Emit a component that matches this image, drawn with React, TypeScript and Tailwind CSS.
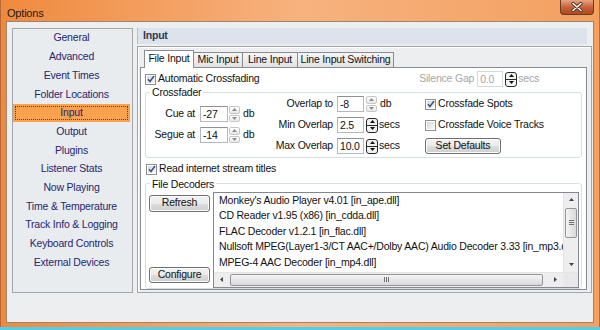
import React from "react";

const navItems = [
  "General",
  "Advanced",
  "Event Times",
  "Folder Locations",
  "Input",
  "Output",
  "Plugins",
  "Listener Stats",
  "Now Playing",
  "Time & Temperature",
  "Track Info & Logging",
  "Keyboard Controls",
  "External Devices",
];

const decoders = [
  "Monkey's Audio Player v4.01 [in_ape.dll]",
  "CD Reader v1.95 (x86) [in_cdda.dll]",
  "FLAC Decoder v1.2.1 [in_flac.dll]",
  "Nullsoft MPEG(Layer1-3/CT AAC+/Dolby AAC) Audio Decoder 3.33 [in_mp3.dll]",
  "MPEG-4 AAC Decoder [in_mp4.dll]",
];

function Tri({ dir, color = "#111" }: { dir: "up" | "down" | "left" | "right"; color?: string }) {
  const pts = {
    up: "0,3 2.5,0 5,3",
    down: "0,0 2.5,3 5,0",
    left: "3,0 0,2.5 3,5",
    right: "0,0 3,2.5 0,5",
  }[dir];
  const vertical = dir === "up" || dir === "down";
  return (
    <svg width={vertical ? 5 : 3} height={vertical ? 3 : 5} viewBox={vertical ? "0 0 5 3" : "0 0 3 5"}>
      <polygon points={pts} fill={color} />
    </svg>
  );
}

function SpinLight() {
  return (
    <div className="flex flex-col gap-[1px] w-[11px] h-[16px] shrink-0">
      <div className="flex-1 border border-[#c6c6c6] rounded-[2px] bg-linear-to-b from-white to-[#e8e8e8] flex items-center justify-center">
        <Tri dir="up" color="#8c8c8c" />
      </div>
      <div className="flex-1 border border-[#c6c6c6] rounded-[2px] bg-linear-to-b from-white to-[#e8e8e8] flex items-center justify-center">
        <Tri dir="down" color="#8c8c8c" />
      </div>
    </div>
  );
}

function SpinDark() {
  return (
    <div className="flex flex-col w-[12px] h-[15px] border border-[#2a2a2a] rounded-[3px] bg-[#f2f2f2] shrink-0 overflow-hidden">
      <div className="flex-1 flex items-center justify-center border-b border-[#2a2a2a]">
        <Tri dir="up" />
      </div>
      <div className="flex-1 flex items-center justify-center">
        <Tri dir="down" />
      </div>
    </div>
  );
}

function Field({ value, className = "", disabled }: { value: string; className?: string; disabled?: boolean }) {
  return (
    <div
      className={`h-[16px] shrink-0 border bg-white pl-[2px] leading-[14px] ${
        disabled ? "border-[#d8d8d8] text-[#a6a6a6]" : "border-[#b5b8c0] border-t-[#8f9197] text-[#111]"
      } ${className}`}
    >
      {value}
    </div>
  );
}

function Check({ on }: { on?: boolean }) {
  return (
    <span className="w-[11px] h-[11px] shrink-0 border border-[#8f8f8f] bg-white p-[1px] flex">
      <span className="flex-1 bg-linear-to-br from-[#d8d8d8] to-[#f9f9f9] flex items-center justify-center">
        {on && (
          <svg width="8" height="8" viewBox="0 0 8 8">
            <path d="M1 4.2 L3 6.5 L7 1" fill="none" stroke="#3d4f8c" strokeWidth="1.5" />
          </svg>
        )}
      </span>
    </span>
  );
}

function Btn({ children, className = "" }: { children: React.ReactNode; className?: string }) {
  return (
    <div
      className={`shrink-0 flex items-center justify-center border border-[#707070] rounded-[3px] shadow-[inset_0_0_0_1px_#fcfcfc] bg-[linear-gradient(#f2f2f2,#ebebeb_50%,#dddddd_50%,#cfcfcf)] text-[#111] ${className}`}
    >
      {children}
    </div>
  );
}

export default function App() {
  return (
    <div className="w-[600px] h-[330px] flex flex-col font-['Liberation_Sans',Arial,sans-serif] text-[10.5px] tracking-[-0.2px] text-[#111]">
      <div className="h-[327px] flex flex-col bg-linear-to-r from-[#ef8a3c] via-[#f7b27e] to-[#f3a060] border-l border-r border-[#b8683a]">
        {/* title bar */}
        <div className="h-[21px] flex items-start justify-between">
          <div className="pl-[6px] pt-[5px] text-[11px] text-[#1a1a1a]">Options</div>
          <div className="mr-[5px] w-[34px] h-[15px] rounded-b-[4px] border border-t-0 border-[#6f3a22] bg-[linear-gradient(#e7a582,#c8643c_50%,#ad4a22)] flex items-center justify-center">
            <svg width="12" height="10" viewBox="0 0 12 10">
              <path d="M2 1.5 L10 8.5 M10 1.5 L2 8.5" stroke="#4a2a1c" strokeWidth="3.2" strokeLinecap="round" />
              <path d="M2 1.5 L10 8.5 M10 1.5 L2 8.5" stroke="#ffffff" strokeWidth="1.6" strokeLinecap="round" />
            </svg>
          </div>
        </div>

        {/* client area */}
        <div className="mx-[5px] h-[302px] border border-[#9c8472] bg-[#eceeef] flex gap-[4px] pl-[5px] pt-[6px]">
          {/* nav list */}
          <div className="w-[121px] h-[265px] border border-[#a4a6a8] bg-[#e9ecee] flex flex-col pr-[2px]">
            {navItems.map((item) =>
              item === "Input" ? (
                <div key={item} className="h-[18.7px] shrink-0 bg-[#f8a24e] p-[2px]">
                  <div className="h-full border border-dotted border-[#5a3a20] flex items-center justify-center text-[#262673]">
                    {item}
                  </div>
                </div>
              ) : (
                <div key={item} className="h-[18.7px] shrink-0 flex items-center justify-center text-[#262673]">
                  {item}
                </div>
              )
            )}
          </div>

          {/* right side */}
          <div className="w-[455px] h-[265px] flex flex-col">
            <div className="h-[16px] w-[450px] border-l border-[#b9bec4] bg-[#dde3ea] pl-[5px] flex items-center font-bold text-[#2c3756]">
              Input
            </div>

            <div className="mt-[2px] h-[247px] border border-[#a3a5a8] shadow-[inset_1px_1px_0_#ffffff] pl-[2px] pt-[3px] pr-[3px] flex flex-col">
              {/* tabs */}
              <div className="h-[17px] pl-[4px] flex items-end">
                <div className="relative z-10 w-[50px] h-[18px] -mb-[1px] border border-b-0 border-[#898c95] bg-white flex items-center justify-center pb-[1px]">
                  File Input
                </div>
                <div className="w-[49px] h-[15px] border border-l-0 border-b-0 border-[#898c95] bg-linear-to-b from-[#f6f6f6] to-[#e2e2e2] flex items-center justify-center">
                  Mic Input
                </div>
                <div className="w-[55px] h-[15px] border border-l-0 border-b-0 border-[#898c95] bg-linear-to-b from-[#f6f6f6] to-[#e2e2e2] flex items-center justify-center">
                  Line Input
                </div>
                <div className="w-[96px] h-[15px] border border-l-0 border-b-0 border-[#898c95] bg-linear-to-b from-[#f6f6f6] to-[#e2e2e2] flex items-center justify-center">
                  Line Input Switching
                </div>
              </div>

              {/* tab page */}
              <div className="w-[447px] h-[223px] border border-[#898c95] bg-white flex flex-col">
                <div className="mt-[4px] h-[14px] pl-[4px] flex items-center">
                  <Check on />
                  <span className="ml-[2px]">Automatic Crossfading</span>
                  <div className="ml-auto mr-[47px] flex items-center">
                    <span className="text-[#a6a6a6]">Silence Gap</span>
                    <Field value="0.0" disabled className="ml-[3px] w-[26px] h-[15px]" />
                    <div className="ml-[2px]">
                      <SpinDark />
                    </div>
                    <span className="ml-[1px] text-[#a6a6a6]">secs</span>
                  </div>
                </div>

                <fieldset className="ml-[4px] mr-[4px] h-[72px] border border-[#d5dfe5] rounded-[3px] flex">
                  <legend className="ml-[4px] px-[2px] leading-[12px]">Crossfader</legend>
                  <div className="flex">
                    <div className="w-[114px] mt-[8px] flex flex-col gap-[5px]">
                      {[
                        ["Cue at", "-27"],
                        ["Segue at", "-14"],
                      ].map(([label, v]) => (
                        <div key={label} className="h-[16px] flex items-center">
                          <span className="w-[49px] text-right">{label}</span>
                          <Field value={v} className="ml-[5px] w-[28px]" />
                          <div className="ml-[1px]">
                            <SpinLight />
                          </div>
                          <span className="ml-[3px]">db</span>
                        </div>
                      ))}
                    </div>
                    <div className="w-[165px] -mt-[2px] flex flex-col gap-[5px]">
                      <div className="h-[16px] flex items-center">
                        <span className="w-[73px] text-right">Overlap to</span>
                        <Field value="-8" className="ml-[4px] w-[27px]" />
                        <div className="ml-[2px]">
                          <SpinLight />
                        </div>
                        <span className="ml-[3px]">db</span>
                      </div>
                      {[
                        ["Min Overlap", "2.5"],
                        ["Max Overlap", "10.0"],
                      ].map(([label, v]) => (
                        <div key={label} className="h-[16px] flex items-center">
                          <span className="w-[73px] text-right">{label}</span>
                          <Field value={v} className="ml-[4px] w-[27px]" />
                          <div className="ml-[2px]">
                            <SpinDark />
                          </div>
                          <span className="ml-[1px]">secs</span>
                        </div>
                      ))}
                    </div>
                    <div className="-mt-[2px] flex flex-col gap-[5px]">
                      <div className="h-[16px] flex items-center">
                        <Check on />
                        <span className="ml-[2px]">Crossfade Spots</span>
                      </div>
                      <div className="h-[16px] flex items-center">
                        <Check />
                        <span className="ml-[2px]">Crossfade Voice Tracks</span>
                      </div>
                      <Btn className="w-[76px] h-[16px]">Set Defaults</Btn>
                    </div>
                  </div>
                </fieldset>

                <div className="mt-[4px] h-[14px] pl-[5px] flex items-center">
                  <Check on />
                  <span className="ml-[2px]">Read internet stream titles</span>
                </div>

                <fieldset className="mt-[1.5px] ml-[4px] mr-[4px] h-[111px] border border-[#d5dfe5] rounded-[3px] flex">
                  <legend className="ml-[4px] px-[2px] leading-[12px]">File Decoders</legend>
                  <div className="flex">
                    <div className="pl-[3px] flex flex-col justify-between pt-[5px] pb-[5px]">
                      <Btn className="w-[61px] h-[17px]">Refresh</Btn>
                      <Btn className="w-[61px] h-[16px]">Configure</Btn>
                    </div>
                    <div className="ml-[3px] mt-[2px] w-[366px] h-[96px] border border-[#828790] bg-white flex flex-col">
                      <div className="flex-1 flex min-h-0">
                        <div className="flex-1 overflow-hidden pl-[5px] whitespace-nowrap">
                          {decoders.map((d) => (
                            <div key={d} className="h-[15.5px] leading-[15.5px]">
                              {d}
                            </div>
                          ))}
                        </div>
                        <div className="w-[15px] bg-[#eeeeee] border-l border-[#e4e4e4] flex flex-col">
                          <div className="h-[14px] flex items-center justify-center">
                            <Tri dir="up" color="#444" />
                          </div>
                          <div className="mx-[1px] mt-[1px] h-[30px] rounded-[2px] border border-[#969696] bg-linear-to-r from-[#f4f4f4] to-[#d9d9d9] flex flex-col items-center justify-center gap-[1px]">
                            <div className="w-[5px] h-[1px] bg-[#707070]" />
                            <div className="w-[5px] h-[1px] bg-[#707070]" />
                            <div className="w-[5px] h-[1px] bg-[#707070]" />
                          </div>
                          <div className="flex-1" />
                          <div className="h-[14px] flex items-center justify-center">
                            <Tri dir="down" color="#444" />
                          </div>
                        </div>
                      </div>
                      <div className="h-[15px] flex bg-[#eeeeee] border-t border-[#e4e4e4]">
                        <div className="w-[15px] flex items-center justify-center">
                          <Tri dir="left" color="#444" />
                        </div>
                        <div className="ml-[1px] w-[313px] my-[1px] rounded-[2px] border border-[#969696] bg-linear-to-b from-[#f4f4f4] to-[#d9d9d9] flex items-center justify-center gap-[1px]">
                          <div className="w-[1px] h-[5px] bg-[#707070]" />
                          <div className="w-[1px] h-[5px] bg-[#707070]" />
                          <div className="w-[1px] h-[5px] bg-[#707070]" />
                        </div>
                        <div className="flex-1" />
                        <div className="w-[15px] flex items-center justify-center">
                          <Tri dir="right" color="#444" />
                        </div>
                        <div className="w-[15px] bg-[#e8e8e8]" />
                      </div>
                    </div>
                  </div>
                </fieldset>
              </div>
            </div>
          </div>
        </div>
      </div>
      <div className="h-[3px] bg-[#4fcfe8]" />
    </div>
  );
}
